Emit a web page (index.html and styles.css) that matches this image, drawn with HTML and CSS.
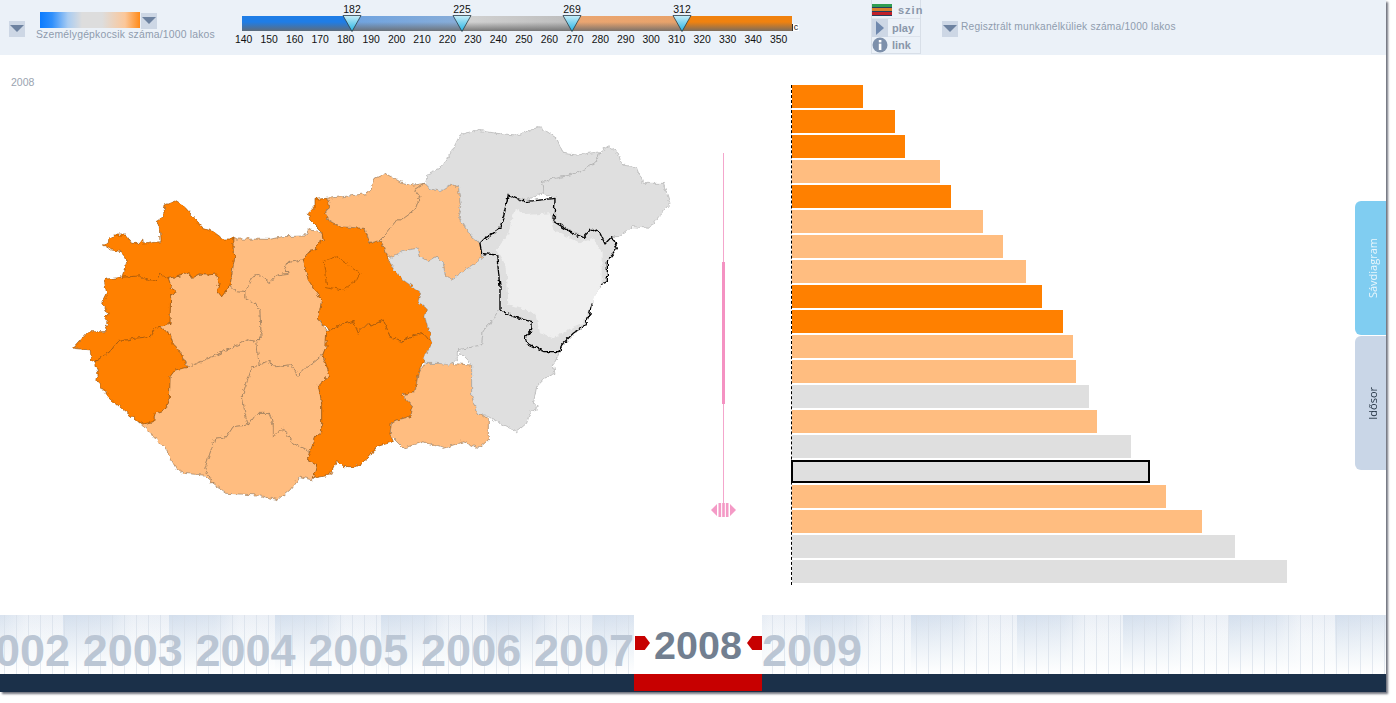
FILE: index.html
```html
<!DOCTYPE html>
<html lang="hu">
<head>
<meta charset="utf-8">
<title>Személygépkocsik száma</title>
<link rel="stylesheet" href="styles.css">
</head>
<body>
<div class="page">
  <header class="header">
    <button class="dd dd-left" aria-label="menu"></button>
    <div class="legend">
      <div class="legend-top">
        <div class="legend-ramp"></div>
        <button class="dd dd-ramp" aria-label="menu"></button>
      </div>
      <div class="indicator">Személygépkocsik száma/1000 lakos</div>
    </div>
    <div class="range">
      <div class="range-bar">
        <span class="handle" style="left:110px"><b>182</b><svg width="20" height="17" viewBox="0 0 20 17"><defs><linearGradient id="hg" x1="0" y1="0" x2="0" y2="1"><stop offset="0" stop-color="#c9eef8"/><stop offset="1" stop-color="#1fb1e2"/></linearGradient></defs><path d="M1 .5 H19 L10 16.5 Z" fill="url(#hg)" stroke="#2a3a44" stroke-width=".8"/></svg></span>
        <span class="handle" style="left:220px"><b>225</b><svg width="20" height="17" viewBox="0 0 20 17"><path d="M1 .5 H19 L10 16.5 Z" fill="url(#hg)" stroke="#2a3a44" stroke-width=".8"/></svg></span>
        <span class="handle" style="left:330px"><b>269</b><svg width="20" height="17" viewBox="0 0 20 17"><path d="M1 .5 H19 L10 16.5 Z" fill="url(#hg)" stroke="#2a3a44" stroke-width=".8"/></svg></span>
        <span class="handle" style="left:440px"><b>312</b><svg width="20" height="17" viewBox="0 0 20 17"><path d="M1 .5 H19 L10 16.5 Z" fill="url(#hg)" stroke="#2a3a44" stroke-width=".8"/></svg></span>
        <span class="range-c">c</span>
      </div>
      <div class="ticks">
        <span>140</span><span>150</span><span>160</span><span>170</span><span>180</span><span>190</span><span>200</span><span>210</span><span>220</span><span>230</span><span>240</span><span>250</span><span>260</span><span>270</span><span>280</span><span>290</span><span>300</span><span>310</span><span>320</span><span>330</span><span>340</span><span>350</span>
      </div>
    </div>
    <div class="tools">
      <div class="tool tool-first">
        <svg class="tool-icon" width="20" height="12" viewBox="0 0 20 12"><rect width="20" height="12" fill="#23405e"/><rect y="0" width="20" height="3" fill="#2f9d52"/><rect y="4" width="20" height="3" fill="#d9802c"/><rect y="8" width="20" height="3" fill="#c0202a"/></svg>
        <span class="tool-name tool-szin">szin</span>
      </div>
      <div class="tool">
        <span class="play-box"><svg width="10" height="14" viewBox="0 0 10 14"><path d="M1 0 L9 7 L1 14 Z" fill="#6f88ad"/></svg></span>
        <span class="tool-name">play</span>
      </div>
      <div class="tool">
        <svg class="tool-icon" width="16" height="16" viewBox="0 0 16 16"><circle cx="8" cy="8" r="7.5" fill="#7d90ab"/><rect x="6.8" y="3" width="2.6" height="2.4" fill="#fff"/><rect x="6.8" y="6.6" width="2.6" height="6.4" fill="#fff"/></svg>
        <span class="tool-name">link</span>
      </div>
    </div>
    <button class="dd dd-right" aria-label="menu"></button>
    <div class="indicator indicator-right">Regisztrált munkanélküliek száma/1000 lakos</div>
  </header>

  <main class="main">
    <section class="map-panel">
      <div class="map-year">2008</div>
      <svg class="map" width="700" height="560" viewBox="0 55 700 560">
        <defs>
          <filter id="rough" x="-5%" y="-5%" width="110%" height="110%" color-interpolation-filters="sRGB">
            <feTurbulence type="fractalNoise" baseFrequency=".22" numOctaves="2" seed="4" result="n"/>
            <feDisplacementMap in="SourceGraphic" in2="n" scale="5" xChannelSelector="R" yChannelSelector="G"/>
          </filter>
        </defs>
        <g filter="url(#rough)">
        <g transform="translate(60 120) scale(.33333)">
          <g class="c-light">
            <polygon points="325,475 360,468 385,458 395,475 420,462 440,465 470,462 478,490 470,510 485,530 510,497 530,515 555,517 555,535 585,550 600,570 603,630 610,642 590,665 565,660 520,680 470,705 385,742 360,695 340,675 330,640 298,620 330,610 332,525 350,515 335,505"/>
            <polygon points="518,357 630,358 665,350 735,348 745,330 785,335 790,360 770,375 770,390 745,395 730,420 680,428 675,450 685,460 650,465 630,490 600,465 575,472 555,517 530,515 510,497 525,405 520,400"/>
            <polygon points="555,517 575,472 600,465 630,490 650,465 685,460 675,450 680,428 730,420 745,480 785,540 775,600 800,630 798,680 788,705 765,725 735,745 715,768 690,735 650,740 620,725 597,735 590,665 610,642 603,630 600,570 585,550 555,535"/>
            <polygon points="382,742 470,705 520,680 565,660 590,665 597,735 575,745 560,790 547,825 555,880 565,915 520,920 500,950 465,955 450,1000 435,1045 460,1090 430,1065 370,1060 345,1040 320,990 280,950 235,905 250,912 280,905 285,880 318,868 328,840 330,770 345,750"/>
            <polygon points="465,955 500,950 520,920 565,915 590,880 630,880 640,920 670,925 700,970 750,995 740,1020 770,1035 760,1080 720,1070 690,1110 655,1140 590,1125 500,1120 460,1090 435,1045 450,1000"/>
            <polygon points="597,735 620,725 650,740 690,735 715,768 735,745 765,725 788,705 810,765 775,795 785,850 785,935 770,945 750,995 700,970 670,925 640,950 640,920 630,880 590,880 565,915 555,880 547,825 560,790 575,745"/>
          </g>
          <g class="c-dark">
            <polygon points="130,375 165,345 195,345 215,370 240,370 248,358 250,372 300,365 298,320 288,305 310,290 315,255 345,243 375,262 400,290 430,325 460,335 490,357 518,357 520,400 525,405 515,460 510,497 485,530 470,510 478,490 470,462 440,465 420,462 395,475 385,458 360,468 325,475 300,462 290,480 265,480 240,468 185,472 200,430 185,395 155,390"/>
            <polygon points="132,478 185,472 240,468 265,480 290,480 300,462 325,475 335,505 350,515 332,525 330,610 298,620 285,625 270,650 225,655 175,665 150,695 105,725 95,720 90,690 40,685 85,635 135,635 145,610 135,595 145,580 125,550 140,520"/>
            <polygon points="105,725 150,695 175,665 225,655 270,650 285,625 298,620 330,640 340,675 360,695 382,742 345,750 330,770 328,840 318,868 285,880 280,905 250,912 235,905 190,870 145,830 110,780 115,765"/>
            <polygon points="765,238 800,235 810,255 795,280 805,300 840,320 915,325 930,370 960,360 980,400 985,420 1005,450 1030,480 1080,515 1075,545 1100,565 1095,590 1115,670 1090,640 1050,650 1025,665 990,650 970,600 930,620 925,610 895,640 880,605 850,612 810,630 775,600 785,540 745,480 730,420 745,395 770,390 770,375 790,360 785,335 750,300 745,280 765,260"/>
            <polygon points="790,425 830,410 870,440 900,460 890,480 850,510 800,500 795,460"/>
            <polygon points="800,630 810,630 850,612 880,605 895,640 925,610 930,620 970,600 990,650 1025,665 1050,650 1090,640 1115,670 1100,700 1085,735 1075,760 1065,815 1025,825 1055,855 1050,890 995,905 990,940 1000,965 950,980 930,1010 890,1040 850,1040 830,1025 810,1065 760,1075 770,1035 740,1020 750,995 770,945 785,935 785,850 775,795 810,765 788,705 798,680"/>
          </g>
        </g>
        <g transform="translate(370 120) scale(.33333)">
          <g class="c-light">
            <polygon points="-130,235 -80,230 -5,220 15,175 45,160 90,185 130,195 165,190 135,210 150,230 135,270 95,300 80,300 50,340 30,360 0,370 -15,325 -90,320 -125,300 -135,280 -120,255"/>
            <polygon points="150,230 135,210 165,190 180,205 210,215 240,195 265,195 272,260 265,290 300,345 330,370 335,415 265,465 245,478 225,465 220,430 200,410 175,425 150,410 145,385 115,390 60,412 50,400 30,360 50,340 80,300 95,300 135,270"/>
            <polygon points="165,730 205,730 240,730 305,735 305,825 320,880 355,895 355,960 325,985 280,965 220,985 160,965 100,985 60,945 65,905 120,890 125,855 95,825 135,815 145,760"/>
          </g>
          <g class="c-gray">
            <polygon points="165,190 175,160 210,145 245,95 270,45 320,30 380,40 440,45 510,20 560,55 580,100 620,105 690,95 680,125 640,150 600,165 560,175 515,185 520,220 470,240 440,235 415,225 400,290 390,320 350,355 330,370 300,345 265,290 272,260 265,195 240,195 210,215 180,205"/>
            <polygon points="515,185 560,175 600,165 640,150 680,125 690,95 715,78 745,100 755,135 800,140 820,190 880,190 900,250 870,285 840,325 785,320 745,350 725,350 705,370 690,340 665,325 650,350 610,335 555,305 555,235 520,220"/>
            <polygon points="55,420 85,400 115,390 145,385 150,410 175,425 200,410 220,430 225,465 245,478 265,465 335,415 335,400 380,405 390,500 390,570 370,600 340,630 335,675 262,690 262,720 240,735 205,730 165,730 160,715 185,670 165,590 170,565 145,545 150,515 100,480 75,450"/>
            <polygon points="262,690 335,675 340,630 370,600 390,570 430,590 487,605 485,630 465,650 470,670 525,695 570,695 550,735 555,760 530,770 500,800 490,850 505,860 480,880 470,910 440,935 400,915 355,890 320,880 305,825 305,735"/>
          </g>
          <polygon class="c-selected" points="415,225 440,235 465,245 555,235 552,305 610,340 640,352 665,325 690,340 705,372 725,350 742,385 712,425 712,485 690,495 665,540 660,580 645,615 610,640 575,675 570,695 525,695 470,670 465,650 485,630 487,605 430,590 390,570 390,500 380,405 335,400 330,370 345,355 390,325 400,290"/>
          <polygon class="c-inner" points="435,265 470,285 540,280 550,330 630,370 670,355 695,395 695,490 660,560 640,610 595,630 550,655 510,640 495,580 415,555 410,440 380,390 415,340"/>
        </g>
        </g>
      </svg>
    </section>

    <section class="slider-panel">
      <div class="vslider">
        <div class="vline vline-top"></div>
        <div class="vthick"></div>
        <div class="vline vline-bottom"></div>
        <svg class="vgrip" width="25" height="14" viewBox="0 0 25 14"><path d="M0 7 L6 1 V13 Z M19 1 L25 7 L19 13 Z" fill="#f49ac6"/><rect x="7.5" y="0" width="2.6" height="14" fill="#f49ac6"/><rect x="11.2" y="0" width="2.6" height="14" fill="#f49ac6"/><rect x="14.9" y="0" width="2.6" height="14" fill="#f49ac6"/></svg>
      </div>
    </section>

    <section class="bars">
      <div class="bar bar-dark" style="width:71px"></div>
      <div class="bar bar-dark" style="width:103px"></div>
      <div class="bar bar-dark" style="width:113px"></div>
      <div class="bar bar-light" style="width:148px"></div>
      <div class="bar bar-dark" style="width:159px"></div>
      <div class="bar bar-light" style="width:191px"></div>
      <div class="bar bar-light" style="width:211px"></div>
      <div class="bar bar-light" style="width:234px"></div>
      <div class="bar bar-dark" style="width:250px"></div>
      <div class="bar bar-dark" style="width:271px"></div>
      <div class="bar bar-light" style="width:281px"></div>
      <div class="bar bar-light" style="width:284px"></div>
      <div class="bar bar-gray" style="width:297px"></div>
      <div class="bar bar-light" style="width:305px"></div>
      <div class="bar bar-gray" style="width:339px"></div>
      <div class="bar bar-gray bar-selected" style="width:359px"></div>
      <div class="bar bar-light" style="width:374px"></div>
      <div class="bar bar-light" style="width:410px"></div>
      <div class="bar bar-gray" style="width:443px"></div>
      <div class="bar bar-gray" style="width:495px"></div>
    </section>

    <nav class="tabs">
      <a class="tab tab-active"><span>Sávdiagram</span></a>
      <a class="tab"><span>Idősor</span></a>
    </nav>
  </main>

  <div class="timeline">
    <div class="years">
      <span class="year">2002</span>
      <span class="year">2003</span>
      <span class="year">2004</span>
      <span class="year">2005</span>
      <span class="year">2006</span>
      <span class="year">2007</span>
      <span class="year-current">
        <i class="mark mark-left"></i>
        2008
        <i class="mark mark-right"></i>
      </span>
      <span class="year year-next">2009</span>
    </div>
    <div class="track"><div class="track-current"></div></div>
  </div>
</div>
</body>
</html>
```

FILE: styles.css
```css
* { box-sizing: border-box; }
html, body { margin: 0; padding: 0; background: #fff; overflow: hidden; }
body { font-family: "Liberation Sans", Arial, sans-serif; width: 1396px; height: 703px; }

.page {
  position: relative;
  width: 1386px;
  height: 692px;
  display: flex;
  flex-direction: column;
  box-shadow: 2px 2px 2px #70737e;
}

/* header */
.header {
  height: 55px;
  flex: none;
  display: flex;
  align-items: flex-start;
  padding-left: 9px;
  background: #ebf1f8;
}
.dd {
  flex: none;
  width: 16px;
  height: 16px;
  padding: 0;
  border: 0;
  background: #cdd7e5;
  position: relative;
}
.dd::after {
  content: "";
  position: absolute;
  left: 1px;
  top: 4px;
  border-left: 7px solid transparent;
  border-right: 7px solid transparent;
  border-top: 7px solid #6d82a0;
}
.dd-left { margin-top: 21px; }
.dd-ramp { margin-left: 1px; margin-top: 1px; }
.dd-right { margin-left: 21px; margin-top: 21px; }

.legend { margin-left: 11px; width: 206px; padding-top: 12px; }
.legend-top { display: flex; margin-left: 4px; height: 16px; }
.legend-ramp {
  width: 100px;
  height: 16px;
  background: linear-gradient(90deg, #0a7bff 0, #2f8ffc 12%, #a9ccf2 28%, #dddddd 42%, #dddddd 62%, #fbc79a 85%, #ff8a18 100%);
}
.indicator { font-size: 10.4px; color: #8f9cae; letter-spacing: .19px; white-space: nowrap; }
.legend .indicator { line-height: 12px; margin-top: 1px; }
.indicator-right { margin-left: 3px; margin-top: 21px; line-height: 12px; font-size: 10.2px; letter-spacing: .2px; }

.range { width: 629px; padding-top: 16px; }
.range-bar {
  position: relative;
  width: 550px;
  height: 15px;
  background:
    linear-gradient(180deg, rgba(120,120,120,0) 0, rgba(120,120,120,0) 40%, rgba(105,105,105,.85) 100%),
    linear-gradient(90deg, #1f7de6 0, #1f7de6 20%, #6fa3e0 20%, #88add8 40%, #d2d2d2 40%, #bdbdbd 60%, #eaa672 60%, #e8a26a 80%, #f0820f 80%, #f0820f 100%);
}
.handle {
  position: absolute;
  top: -13px;
  width: 24px;
  margin-left: -12px;
  display: flex;
  flex-direction: column;
  align-items: center;
}
.handle b {
  display: block;
  font-size: 10.5px;
  font-weight: normal;
  line-height: 12px;
  color: #111;
}
.handle svg { display: block; }
.range-c {
  position: absolute;
  left: 100%;
  top: 8px;
  width: 7px;
  height: 7px;
  background: #fff;
  border-left: 1px solid #333;
  font-size: 9px;
  line-height: 6px;
  text-align: center;
  color: #222;
}
.ticks { display: flex; margin-left: -11px; margin-top: 3px; }
.ticks span { width: 25.48px; text-align: center; flex: none; font-size: 10.4px; line-height: 12px; color: #111; }

.tools {
  flex: none;
  width: 50px;
  height: 54px;
  border: 1px solid #d8dfe8;
  border-top: 0;
  display: flex;
  flex-direction: column;
}
.tool {
  height: 18px;
  flex: 1;
  display: flex;
  align-items: center;
  border-bottom: 1px solid #dde3ec;
  color: #8a97aa;
}
.tool:last-child { border-bottom: 0; }
.tool-first { padding-top: 2px; }
.tool-icon { flex: none; }
.tool-name { font-size: 11px; font-weight: bold; margin-left: 4px; white-space: nowrap; }
.tool-szin { letter-spacing: 1px; margin-left: 6px; }
.play-box { width: 16px; height: 18px; background: #cdd7e5; display: flex; align-items: center; justify-content: center; flex: none; }

/* main */
.main { position: relative; flex: none; height: 560px; display: flex; background: #fff; }
.map-panel { position: relative; width: 700px; flex: none; }
.map-year { position: absolute; left: 11px; top: 21px; font-size: 10.5px; color: #9aa3b0; }
.map { display: block; }
.c-light polygon { fill: #ffbd80; stroke: #8f7050; stroke-width: 1.8; stroke-linejoin: round; }
.c-dark polygon { fill: #ff8000; stroke: #8f4800; stroke-width: 1.8; stroke-linejoin: round; }
.c-gray polygon { fill: #dfdfdf; stroke: #a6a6a6; stroke-width: 1.8; stroke-linejoin: round; }
.c-selected { fill: #dfdfdf; stroke: #000; stroke-width: 4; stroke-linejoin: round; }
.c-inner { fill: #efefef; }

.slider-panel { width: 91px; flex: none; padding: 98px 0 0 11px; }
.vslider { width: 25px; display: flex; flex-direction: column; align-items: center; }
.vline { width: 1px; background: #f4a6cc; }
.vline-top { height: 109px; }
.vline-bottom { height: 99px; }
.vthick { width: 3px; height: 142px; background: #f492c2; }
.vgrip { display: block; }

.bars {
  margin-top: 30px;
  height: 500px;
  display: flex;
  flex-direction: column;
  gap: 2px;
  align-items: flex-start;
  border-left: 1px dashed #000;
  align-self: flex-start;
}
.bar { height: 23px; flex: none; }
.bar-dark { background: #ff8000; }
.bar-light { background: #ffbd80; }
.bar-gray { background: #dfdfdf; }
.bar-selected { border: 2px solid #000; margin-left: -1px; }

.tabs {
  position: absolute;
  right: 0;
  top: 146px;
  width: 31px;
  display: flex;
  flex-direction: column;
  gap: 1px;
}
.tab {
  height: 134px;
  display: flex;
  align-items: center;
  justify-content: center;
  background: #c9d6e7;
  border-radius: 6px 0 0 6px;
  color: #2b3a4a;
  font-family: "Open Sans", sans-serif;
  font-size: 11px;
}
.tab span { writing-mode: vertical-rl; transform: rotate(180deg); margin-left: 3px; }
.tab-active { background: #80cdf1; color: #e9f6fc; }

/* timeline */
.timeline { flex: none; height: 77px; overflow: hidden; }
.years {
  height: 59px;
  display: flex;
  margin-left: -42.8px;
  width: 1430px;
  background:
    repeating-linear-gradient(90deg, rgba(255,255,255,0) 0, rgba(255,255,255,0) 11px, rgba(214,222,232,.65) 11px, rgba(214,222,232,.65) 12px),
    linear-gradient(180deg, rgba(245,248,251,0) 0, rgba(250,252,253,.85) 75%, #fff 100%),
    repeating-linear-gradient(90deg, rgba(206,219,235,.8) 0, rgba(206,219,235,.55) 46px, rgba(240,244,249,.2) 70px, rgba(240,244,249,.2) 106px),
    linear-gradient(180deg, #e9eef5 0, #f7f9fb 100%);
}
.year {
  width: 112.8px;
  flex: none;
  text-align: right;
  font-size: 45px;
  font-weight: bold;
  line-height: 71px;
  color: #bbc6d4;
  white-space: nowrap;
}
.year-next { width: 100px; text-align: left; }
.year-current {
  position: relative;
  width: 128px;
  flex: none;
  background: #fff;
  text-align: center;
  font-size: 39.5px;
  font-weight: bold;
  line-height: 60px;
  color: #727f90;
}
.mark { position: absolute; top: 21px; width: 15px; height: 14px; background: #c70000; }
.mark-left { left: 1px; clip-path: polygon(0 0, 65% 0, 100% 50%, 65% 100%, 0 100%); }
.mark-right { right: 0; clip-path: polygon(35% 0, 100% 0, 100% 100%, 35% 100%, 0 50%); }
.track { height: 18px; background: #1b3049; padding-left: 634px; }
.track-current { width: 128px; height: 17px; background: #c70000; }
```
